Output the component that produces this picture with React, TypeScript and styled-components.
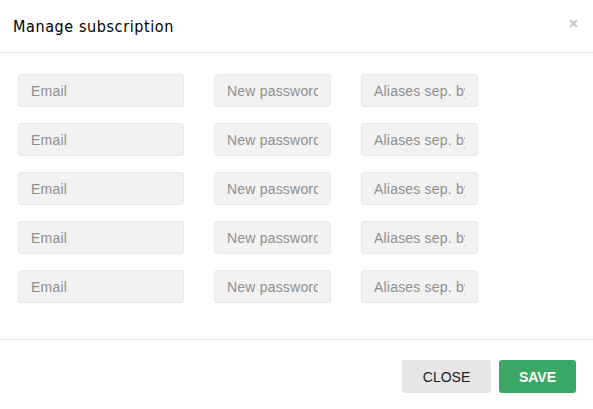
import * as React from 'react'
import styled, {createGlobalStyle} from 'styled-components'

const Global = createGlobalStyle`
	html, body { margin: 0; padding: 0; background: #fff; }
	body { font-family: "Liberation Sans", Arial, sans-serif; }
`;

const Modal = styled.div`
	width: 593px;
	height: 409px;
	display: flex;
	flex-direction: column;
	background: #fff;
`;

const Header = styled.div`
	height: 53px;
	display: flex;
	align-items: center;
	justify-content: space-between;
	padding: 0 14px 0 13px;
	border-bottom: 1px solid #e0e0e0;
	box-sizing: border-box;
	flex: none;
`;

const Title = styled.h4`
	margin: 0;
	font-family: "DejaVu Sans Condensed", "DejaVu Sans", sans-serif;
	font-weight: 300;
	font-size: 16px;
	letter-spacing: 0.6px;
	color: #000;
	padding-top: 1px;
`;

const CloseX = styled.button`
	border: 0;
	background: none;
	padding: 0;
	width: 12px;
	height: 12px;
	display: flex;
	align-items: center;
	justify-content: center;
	margin-top: -5px;
	cursor: pointer;
`;

const Body = styled.div`
	flex: 1;
	padding: 21px 18px 0;
	display: flex;
	flex-direction: column;
	gap: 16px;
	border-bottom: 1px solid #e0e0e0;
`;

const Row = styled.div`
	display: flex;
	gap: 30px;
`;

const Input = styled.input<{$w: number}>`
	width: ${p => p.$w}px;
	height: 33px;
	box-sizing: border-box;
	border: 1px solid #e8e8e8;
	border-radius: 3px;
	background: #f2f2f2;
	padding: 0 12px;
	font-family: "Liberation Sans", Arial, sans-serif;
	font-size: 14px;
	letter-spacing: 0.2px;
	color: #333;
	outline: none;
	&::placeholder { color: #8f8f8f; }
`;

const Footer = styled.div`
	height: 69px;
	flex: none;
	display: flex;
	justify-content: flex-end;
	align-items: flex-start;
	padding: 20px 17px 0;
	box-sizing: border-box;
	gap: 8px;
`;

const Button = styled.button<{$primary?: boolean}>`
	width: ${p => p.$primary ? 77 : 89}px;
	height: 33px;
	border: 0;
	border-radius: 3px;
	padding: 0;
	font-family: "Liberation Sans", Arial, sans-serif;
	font-size: 14px;
	text-transform: uppercase;
	font-weight: ${p => p.$primary ? 700 : 400};
	background: ${p => p.$primary ? "#3aa866" : "#e6e6e6"};
	color: ${p => p.$primary ? "#fff" : "#222"};
	cursor: pointer;
`;

const rows = [0, 1, 2, 3, 4];

export default function App() {
	return (
		<>
			<Global />
			<Modal>
				<Header>
					<Title>Manage subscription</Title>
					<CloseX aria-label="close">
						<svg width="9" height="9" viewBox="0 0 9 9">
							<path d="M1 1L8 8M8 1L1 8" stroke="#c8c8c8" strokeWidth="2" />
						</svg>
					</CloseX>
				</Header>
				<Body>
					{rows.map(i => (
						<Row key={i}>
							<Input $w={166} placeholder="Email" />
							<Input $w={117} placeholder="New password" type="password" />
							<Input $w={117} placeholder="Aliases sep. by comma" />
						</Row>
					))}
				</Body>
				<Footer>
					<Button>Close</Button>
					<Button $primary>Save</Button>
				</Footer>
			</Modal>
		</>
	)
}
